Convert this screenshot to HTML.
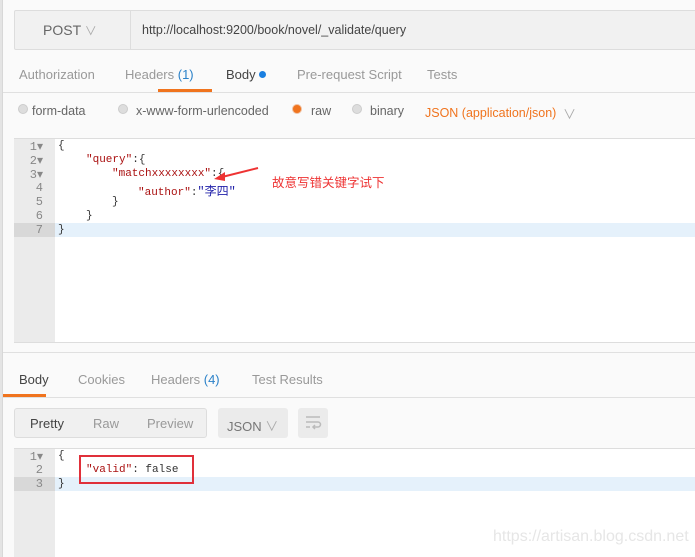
<!DOCTYPE html>
<html><head><meta charset="utf-8"><style>
*{margin:0;padding:0;box-sizing:border-box}
body{width:695px;height:557px;overflow:hidden;background:#fafafa;font-family:"Liberation Sans","Noto Sans CJK SC",sans-serif;position:relative;color:#808080;font-size:12px}
.a{position:absolute}
.mono{font-family:"Liberation Mono","Noto Sans CJK SC",monospace;font-size:11px}
.ln{position:absolute;left:14px;width:41px;text-align:right;padding-right:12px;color:#888;font-size:12px}
.radio{position:absolute;top:104px;width:10px;height:10px;border-radius:50%;background:#ddd;border:1px solid #ccc}
.rt{position:absolute;top:104px;font-size:13px;color:#666;white-space:nowrap}
</style></head><body>
<div class="a" style="left:0;top:0;width:3px;height:557px;background:#e4e4e4;border-right:1px solid #d8d8d8"></div>
<div class="a" style="left:14px;top:10px;width:690px;height:40px;background:#f1f1f1;border:1px solid #ddd;border-radius:2px"></div>
<div class="a" style="left:130px;top:10px;width:1px;height:40px;background:#ddd"></div>
<div class="a" style="left:43px;top:22px;font-size:14px;color:#666">POST <span style="color:#aaa;font-size:12px">&#8744;</span></div>
<div class="a" style="left:142px;top:23px;font-size:12.5px;color:#444">http://localhost:9200/book/novel/_validate/query</div>
<div class="a" style="left:3px;top:92px;width:692px;height:1px;background:#e0e0e0"></div>
<div class="a" style="top:67px;left:19px;font-size:13px;color:#999">Authorization</div>
<div class="a" style="top:67px;left:125px;font-size:13px;color:#999">Headers <span style="color:#2c82c9">(1)</span></div>
<div class="a" style="top:67px;left:226px;font-size:13px;color:#444">Body <span style="display:inline-block;width:7px;height:7px;border-radius:50%;background:#1a7fe0;vertical-align:1px"></span></div>
<div class="a" style="left:158px;top:89px;width:54px;height:3px;background:#f0741e"></div>
<div class="a" style="top:67px;left:297px;font-size:13px;color:#999">Pre-request Script</div>
<div class="a" style="top:67px;left:427px;font-size:13px;color:#999">Tests</div>
<div class="radio" style="left:18px"></div><div class="rt" style="left:32px;font-size:12.5px">form-data</div>
<div class="radio" style="left:118px"></div><div class="rt" style="left:136px;font-size:12.5px">x-www-form-urlencoded</div>
<div class="radio" style="left:292px;background:#f0741e;border-color:#f0c0a0"></div><div class="rt" style="left:311px;font-size:12.5px">raw</div>
<div class="radio" style="left:352px"></div><div class="rt" style="left:370px;font-size:12.5px">binary</div>
<div class="rt" style="left:425px;top:106px;color:#f0741e;font-size:12.5px">JSON (application/json)</div>
<div class="rt" style="left:563px;color:#aaa">&#8744;</div>
<div class="a" style="left:14px;top:138px;width:690px;height:205px;background:#fff;border-top:1px solid #ddd;border-bottom:1px solid #ddd"></div>
<div class="a" style="left:14px;top:139px;width:41px;height:203px;background:#ebebeb"></div>
<div class="a" style="left:14px;top:223px;width:681px;height:14px;background:#e5f1fb"></div>
<div class="a" style="left:14px;top:223px;width:41px;height:14px;background:#d8d8d8"></div>
<div class="mono">
<div class="ln" style="top:139px">1▾</div><div class="ln" style="top:153px">2▾</div><div class="ln" style="top:167px">3▾</div><div class="ln" style="top:181px">4</div><div class="ln" style="top:195px">5</div><div class="ln" style="top:209px">6</div><div class="ln" style="top:223px">7</div>
<div class="a mono" style="left:58px;top:140px;color:#333">{</div>
<div class="a mono" style="left:86px;top:154px;color:#333"><span style="color:#a11">"query"</span>:{</div>
<div class="a mono" style="left:112px;top:168px;color:#333"><span style="color:#a11">"matchxxxxxxxx"</span>:{</div>
<div class="a mono" style="left:138px;top:182px;color:#333"><span style="color:#a11">"author"</span>:<span style="color:#22a;font-size:12px">"李四"</span></div>
<div class="a mono" style="left:112px;top:196px;color:#333">}</div>
<div class="a mono" style="left:86px;top:210px;color:#333">}</div>
<div class="a mono" style="left:58px;top:224px;color:#333">}</div>
</div>
<svg class="a" style="left:210px;top:165px" width="50" height="20"><path d="M48 3 L12 12" stroke="#e33" stroke-width="2"/><path d="M4 14 L15 7 L15 16 Z" fill="#e33"/></svg>
<div class="a" style="left:272px;top:172px;color:#e33;font-size:12.5px">故意写错关键字试下</div>
<div class="a" style="left:3px;top:352px;width:692px;height:1px;background:#e0e0e0"></div>
<div class="a" style="left:3px;top:397px;width:692px;height:1px;background:#e0e0e0"></div>
<div class="a" style="left:3px;top:394px;width:43px;height:3px;background:#f0741e"></div>
<div class="a" style="top:372px;left:19px;font-size:13px;color:#444">Body</div>
<div class="a" style="top:372px;left:78px;font-size:13px;color:#999">Cookies</div>
<div class="a" style="top:372px;left:151px;font-size:13px;color:#999">Headers <span style="color:#2c82c9">(4)</span></div>
<div class="a" style="top:372px;left:252px;font-size:13px;color:#999">Test Results</div>
<div class="a" style="left:14px;top:408px;width:193px;height:30px;background:#f0f0f0;border:1px solid #ddd;border-radius:3px"></div>
<div class="a" style="left:30px;top:416px;font-size:13px;color:#444">Pretty</div>
<div class="a" style="left:93px;top:416px;font-size:13px;color:#999">Raw</div>
<div class="a" style="left:147px;top:416px;font-size:13px;color:#999">Preview</div>
<div class="a" style="left:218px;top:408px;width:70px;height:30px;background:#ebebeb;border-radius:3px"></div>
<div class="a" style="left:227px;top:416px;font-size:13px;color:#777">JSON <span style="color:#aaa">&#8744;</span></div>
<div class="a" style="left:298px;top:408px;width:30px;height:30px;background:#ebebeb;border-radius:3px"></div>
<svg class="a" style="left:304px;top:414px" width="18" height="18"><path d="M2 3H16M2 8H14a2.5 2.5 0 0 1 0 5H9M11 11l-2 2 2 2M2 13H6" stroke="#bbb" stroke-width="1.5" fill="none"/></svg>
<div class="a" style="left:14px;top:448px;width:690px;height:109px;background:#fff;border-top:1px solid #ddd"></div>
<div class="a" style="left:14px;top:449px;width:41px;height:108px;background:#ebebeb"></div>
<div class="a" style="left:14px;top:477px;width:681px;height:14px;background:#e5f1fb"></div>
<div class="a" style="left:14px;top:477px;width:41px;height:14px;background:#d8d8d8"></div>
<div class="mono">
<div class="ln" style="top:449px">1▾</div><div class="ln" style="top:463px">2</div><div class="ln" style="top:477px">3</div>
<div class="a mono" style="left:58px;top:450px;color:#333">{</div>
<div class="a mono" style="left:86px;top:464px;color:#333"><span style="color:#a11">"valid"</span>: false</div>
<div class="a mono" style="left:58px;top:478px;color:#333">}</div>
</div>
<div class="a" style="left:79px;top:455px;width:115px;height:29px;border:2px solid #e0303a"></div>
<div class="a" style="left:493px;top:528px;font-size:16px;color:#e6e6e6">https://artisan.blog.csdn.net</div>
</body></html>
